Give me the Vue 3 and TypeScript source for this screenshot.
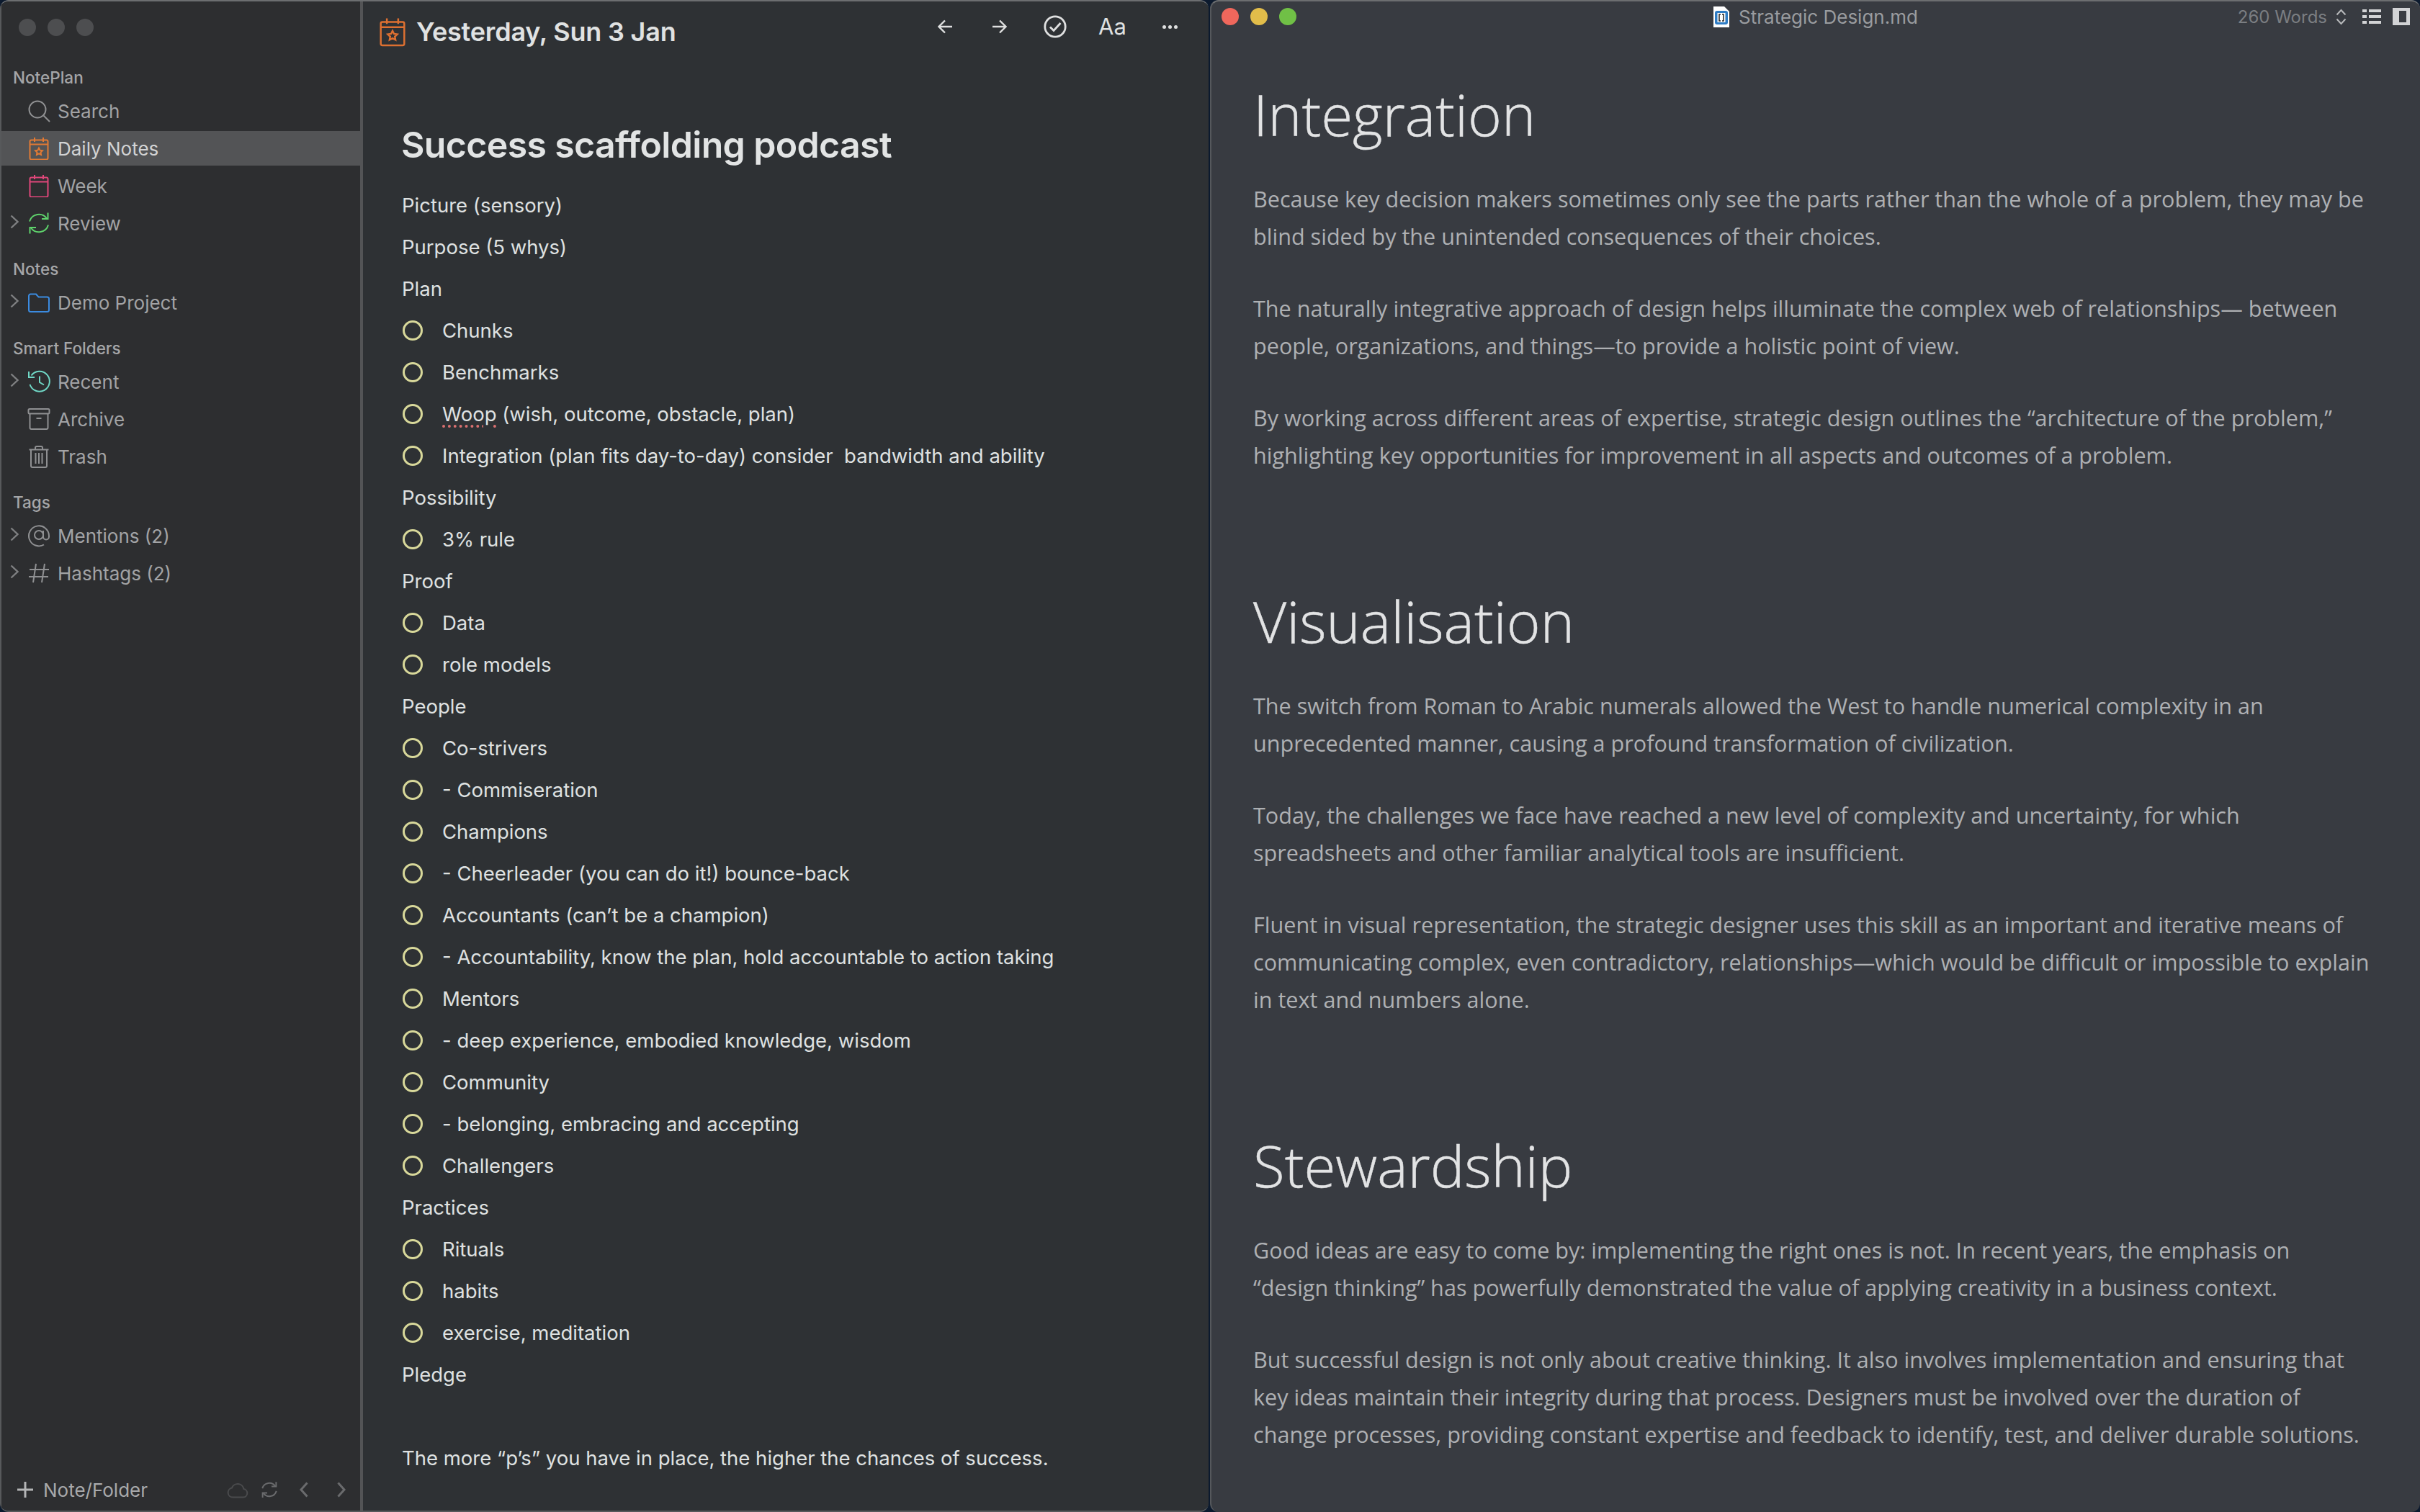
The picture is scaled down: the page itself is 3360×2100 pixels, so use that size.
<script setup lang="ts">
type NavItem = { label: string; icon: string; chevron?: boolean; active?: boolean }
type NavSection = { title: string; items: NavItem[] }
type NoteLine = { text: string; task?: boolean; misspelt?: string }

const star = 'M16 15.600l1.500 3.100 3.400.500-2.450 2.400.580 3.400-3.030-1.600-3.030 1.600.580-3.400-2.450-2.400 3.400-.500z'
const calendar =
  '<rect x="3.500" y="4.500" width="25" height="27" rx="2"/><path d="M3.500 10.500h25M10 1v6M22 1v6"/>'

const icons: Record<string, string> = {
  search:
    '<circle cx="14" cy="14" r="11.500" stroke="#8f9092"/><path d="M22.500 22.500l8.500 8.500" stroke="#8f9092"/>',
  daily: `<g stroke="#e27a34">${calendar}<path d="${star}"/></g>`,
  week: `<g stroke="#e0477a">${calendar}</g>`,
  review:
    '<g stroke="#5fd36c"><path d="M3 13.500A13.500 13.500 0 0 1 27 9.500M29 18.500A13.500 13.500 0 0 1 5 22.500"/><path d="M28.500 1.500v8.500h-8.500M3.500 30.500v-8.500H12"/></g>',
  folder:
    '<path d="M2 7a2.500 2.500 0 0 1 2.500-2.500h7.500l3.500 4h12A2.500 2.500 0 0 1 30 11v15.500a2.500 2.500 0 0 1-2.500 2.500h-23A2.500 2.500 0 0 1 2 26.500z" stroke="#3b8be0"/>',
  recent:
    '<g stroke="#70d8c6"><path d="M5.500 7.500A14 14 0 1 1 3.500 20"/><path d="M2 2v8h8M17 8.500V17l6 3.500"/></g>',
  archive:
    '<g stroke="#8f9092"><rect x="1.500" y="2" width="29" height="6.500" rx="1.500"/><path d="M3.500 8.500V28a2 2 0 0 0 2 2h21a2 2 0 0 0 2-2V8.500M12.500 15h7"/></g>',
  trash:
    '<g stroke="#8f9092"><path d="M2.500 6.500h27M5 6.500V29a2 2 0 0 0 2 2h18a2 2 0 0 0 2-2V6.500M11 6.500V4a2 2 0 0 1 2-2h6a2 2 0 0 1 2 2v2.500M11.500 11v15M16 11v15M20.500 11v15"/></g>',
  mention:
    '<g stroke="#8f9092"><circle cx="16" cy="15" r="6"/><path d="M22 9v8.500a4 4 0 0 0 8 0V16A14 14 0 1 0 23 28.500"/></g>',
  hash: '<path d="M12 3L8 29M24 3l-4 26M3 11h27M2 21h27" stroke="#8f9092"/>',
}

const sections: NavSection[] = [
  {
    title: 'NotePlan',
    items: [
      { label: 'Search', icon: 'search' },
      { label: 'Daily Notes', icon: 'daily', active: true },
      { label: 'Week', icon: 'week' },
      { label: 'Review', icon: 'review', chevron: true },
    ],
  },
  { title: 'Notes', items: [{ label: 'Demo Project', icon: 'folder', chevron: true }] },
  {
    title: 'Smart Folders',
    items: [
      { label: 'Recent', icon: 'recent', chevron: true },
      { label: 'Archive', icon: 'archive' },
      { label: 'Trash', icon: 'trash' },
    ],
  },
  {
    title: 'Tags',
    items: [
      { label: 'Mentions (2)', icon: 'mention', chevron: true },
      { label: 'Hashtags (2)', icon: 'hash', chevron: true },
    ],
  },
]

const t = (text: string): NoteLine => ({ text, task: true })
const p = (text: string): NoteLine => ({ text })

const noteLines: NoteLine[] = [
  p('Picture (sensory)'),
  p('Purpose (5 whys)'),
  p('Plan'),
  t('Chunks'),
  t('Benchmarks'),
  { text: ' (wish, outcome, obstacle, plan)', task: true, misspelt: 'Woop' },
  t('Integration (plan fits day-to-day) consider  bandwidth and ability'),
  p('Possibility'),
  t('3% rule'),
  p('Proof'),
  t('Data'),
  t('role models'),
  p('People'),
  t('Co-strivers'),
  t('- Commiseration'),
  t('Champions'),
  t('- Cheerleader (you can do it!) bounce-back'),
  t('Accountants (can’t be a champion)'),
  t('- Accountability, know the plan, hold accountable to action taking'),
  t('Mentors'),
  t('- deep experience, embodied knowledge, wisdom'),
  t('Community'),
  t('- belonging, embracing and accepting'),
  t('Challengers'),
  p('Practices'),
  t('Rituals'),
  t('habits'),
  t('exercise, meditation'),
  p('Pledge'),
  p(''),
  p('The more “p’s” you have in place, the higher the chances of success.'),
]

// line breaks follow the reader window's own wrapping
const articles = [
  {
    heading: 'Integration',
    paragraphs: [
      'Because key decision makers sometimes only see the parts rather than the whole of a problem, they may be\nblind sided by the unintended consequences of their choices.',
      'The naturally integrative approach of design helps illuminate the complex web of relationships— between\npeople, organizations, and things—to provide a holistic point of view.',
      'By working across different areas of expertise, strategic design outlines the “architecture of the problem,”\nhighlighting key opportunities for improvement in all aspects and outcomes of a problem.',
    ],
  },
  {
    heading: 'Visualisation',
    paragraphs: [
      'The switch from Roman to Arabic numerals allowed the West to handle numerical complexity in an\nunprecedented manner, causing a profound transformation of civilization.',
      'Today, the challenges we face have reached a new level of complexity and uncertainty, for which\nspreadsheets and other familiar analytical tools are insufficient.',
      'Fluent in visual representation, the strategic designer uses this skill as an important and iterative means of\ncommunicating complex, even contradictory, relationships—which would be difficult or impossible to explain\nin text and numbers alone.',
    ],
  },
  {
    heading: 'Stewardship',
    paragraphs: [
      'Good ideas are easy to come by: implementing the right ones is not. In recent years, the emphasis on\n“design thinking” has powerfully demonstrated the value of applying creativity in a business context.',
      'But successful design is not only about creative thinking. It also involves implementation and ensuring that\nkey ideas maintain their integrity during that process. Designers must be involved over the duration of\nchange processes, providing constant expertise and feedback to identify, test, and deliver durable solutions.',
    ],
  },
]
</script>

<template>
  <div class="desktop">
    <div class="notes-window">
      <aside class="sidebar">
        <div class="lights">
          <span class="light"></span>
          <span class="light"></span>
          <span class="light"></span>
        </div>

        <section v-for="section in sections" :key="section.title" class="nav-section">
          <h3 class="nav-title">{{ section.title }}</h3>
          <div
            v-for="item in section.items"
            :key="item.label"
            class="nav-row"
            :class="{ active: item.active }"
          >
            <svg v-if="item.chevron" class="chevron" viewBox="0 0 12 20">
              <path d="M1.500 1.500L10.500 10L1.500 18.500" />
            </svg>
            <svg class="nav-icon" viewBox="0 0 32 32" v-html="icons[item.icon]"></svg>
            <span>{{ item.label }}</span>
          </div>
        </section>

        <footer class="sidebar-foot">
          <svg class="plus" viewBox="0 0 22 22"><path d="M11 0v22M0 11h22" /></svg>
          <span class="foot-label">Note/Folder</span>
          <svg class="cloud" viewBox="0 0 30 24">
            <path d="M8 22.500a6.500 6.500 0 0 1-1-12.900 8.500 8.500 0 0 1 16.400 1.400A5.800 5.800 0 0 1 23 22.500z" />
          </svg>
          <svg class="sync" viewBox="0 0 32 32">
            <path d="M3 13.500A13.500 13.500 0 0 1 27 9.500M29 18.500A13.500 13.500 0 0 1 5 22.500" />
            <path d="M28.500 1.500v8.500h-8.500M3.500 30.500v-8.500H12" />
          </svg>
          <svg class="arrow-btn" viewBox="0 0 12 22"><path d="M10.500 1.500L2 11l8.500 9.500" /></svg>
          <svg class="arrow-btn next" viewBox="0 0 12 22"><path d="M1.500 1.500L10 11l-8.500 9.500" /></svg>
        </footer>
      </aside>

      <main class="editor">
        <header class="editor-head">
          <svg class="head-icon" viewBox="0 0 32 36">
            <rect x="1.500" y="5.500" width="29" height="29" rx="2" />
            <path d="M1.500 12h29M9 1v7M23 1v7" />
            <path d="M16 16.500l1.800 3.700 4 .6-2.900 2.800.7 4-3.600-1.900-3.600 1.900.7-4-2.900-2.800 4-.6z" />
          </svg>
          <span class="head-title">Yesterday, Sun 3 Jan</span>
          <div class="tools">
            <svg class="tool-arrow" viewBox="0 0 21 20"><path d="M20 10H2M10 1.500L1.500 10l8.500 8.500" /></svg>
            <svg class="tool-arrow fwd" viewBox="0 0 21 20"><path d="M1 10h18M11 1.500l8.500 8.500-8.500 8.500" /></svg>
            <svg class="tool-check" viewBox="0 0 32 32">
              <circle cx="16" cy="16" r="14.200" />
              <path d="M9 16.500l5 5 9.500-10.500" />
            </svg>
            <span class="tool-font">Aa</span>
            <span class="tool-dots"><i></i><i></i><i></i></span>
          </div>
        </header>

        <h1 class="doc-title">Success scaffolding podcast</h1>
        <div
          v-for="(line, index) in noteLines"
          :key="index"
          class="note-line"
        >
          <span v-if="line.task" class="task-ring"></span>
          <span class="note-text"><span v-if="line.misspelt" class="misspelt">{{ line.misspelt }}</span>{{ line.text }}</span>
        </div>
      </main>
    </div>

    <div class="reader-window">
      <div class="reader-bar">
        <div class="reader-lights">
          <span class="dot red"></span>
          <span class="dot yellow"></span>
          <span class="dot green"></span>
        </div>
        <div class="reader-file">
          <svg class="file-icon" viewBox="0 0 22 29">
            <path d="M0 0h15l7 7v22H0z" fill="#fff" />
            <rect x="2" y="6" width="18" height="19" rx="3" fill="#2e7cc4" />
            <rect x="5.500" y="9" width="11" height="13" fill="#fff" />
            <path d="M10 11H8v9h2M12 11h2v9h-2" fill="none" stroke="#222" stroke-width="1.500" />
          </svg>
          <span>Strategic Design.md</span>
        </div>
        <div class="reader-tools">
          <span class="word-count">260 Words</span>
          <svg class="updown" viewBox="0 0 15 23"><path d="M1.500 8.500L7.500 2l6 6.500M1.500 14.500l6 6.500 6-6.500" /></svg>
          <svg class="list-icon" viewBox="0 0 26 22">
            <path d="M0 1h6v4H0zM9 1h17v4H9zM0 9h6v4H0zM9 9h17v4H9zM0 17h6v4H0zM9 17h17v4H9z" />
          </svg>
          <svg class="panel-icon" viewBox="0 0 24 24">
            <path fill-rule="evenodd" d="M0 0h24v24H0zM9 4v16h10V4z" />
          </svg>
        </div>
      </div>

      <article v-for="article in articles" :key="article.heading" class="article">
        <h2>{{ article.heading }}</h2>
        <p v-for="(paragraph, index) in article.paragraphs" :key="index">{{ paragraph }}</p>
      </article>
    </div>
  </div>
</template>

<style scoped>
.desktop {
  display: flex;
  width: 3360px;
  height: 2100px;
  overflow: hidden;
  background: #0c1a2e;
  gap: 2px;
}

.notes-window {
  display: flex;
  width: 1678px;
  height: 2100px;
  flex: none;
  overflow: hidden;
  border-radius: 12px;
  border-top: 2px solid #6c6e70;
  border-bottom: 2px solid #57595b;
  box-sizing: border-box;
  font-family: Inter, "Noto Sans", sans-serif;
}

.sidebar {
  display: flex;
  flex-direction: column;
  width: 504px;
  flex: none;
  box-sizing: border-box;
  background: #2d2e30;
  border-left: 2px solid #57595b;
  border-right: 4px solid #535456;
}

.lights {
  display: flex;
  gap: 16px;
  padding: 24px 0 0 24px;
  height: 66px;
  box-sizing: border-box;
  margin-bottom: 24px;
}

.light {
  width: 24px;
  height: 24px;
  border-radius: 50%;
  background: #4d4e50;
}

.nav-section {
  margin-bottom: 20px;
}

.nav-title {
  margin: 0 0 6px;
  padding-left: 16px;
  height: 32px;
  font-size: 22.500px;
  line-height: 32px;
  font-weight: 500;
  color: #a5a6a8;
}

.nav-row {
  position: relative;
  display: flex;
  align-items: center;
  height: 48px;
  margin-bottom: 4px;
  padding-left: 36px;
  font-size: 26px;
  color: #a2a3a5;
}

.nav-row.active {
  background: #535456;
  color: #d2d3d4;
}

.chevron {
  position: absolute;
  left: 12px;
  top: 12px;
  width: 12px;
  height: 20px;
  fill: none;
  stroke: #7f8082;
  stroke-width: 2.400;
}

.nav-icon {
  width: 32px;
  height: 32px;
  margin-right: 10px;
  fill: none;
  stroke-width: 2;
}

.sidebar-foot {
  display: flex;
  align-items: center;
  margin-top: auto;
  height: 58px;
  padding-left: 22px;
  color: #a8a9ab;
  font-size: 26px;
}

.plus {
  width: 22px;
  height: 22px;
  margin-right: 14px;
  fill: none;
  stroke: #b4b5b6;
  stroke-width: 3;
}

.foot-label {
  width: 255px;
}

.cloud {
  width: 30px;
  height: 24px;
  margin-right: 17px;
  fill: none;
  stroke: #4a4b4d;
  stroke-width: 2;
}

.sync {
  width: 24px;
  height: 26px;
  margin-right: 30px;
  fill: none;
  stroke: #6a6b6d;
  stroke-width: 2.600;
}

.arrow-btn {
  width: 12px;
  height: 22px;
  fill: none;
  stroke: #6a6b6d;
  stroke-width: 3;
}

.arrow-btn.next {
  margin-left: 40px;
}

.editor {
  flex: 1;
  background: #2e3134;
  color: #dfe1e1;
}

.editor-head {
  display: flex;
  align-items: center;
  height: 84px;
  padding: 0 43px 0 23px;
}

.head-icon {
  width: 36px;
  height: 41px;
  margin-right: 15px;
  fill: none;
  stroke: #dd7031;
  stroke-width: 2.200;
}

.head-title {
  font-size: 36px;
  font-weight: 600;
  color: #e0e2e2;
  letter-spacing: -0.200px;
}

.tools {
  display: flex;
  align-items: center;
  margin-left: auto;
  margin-bottom: 14px;
  color: #dfe0e0;
}

.tool-arrow {
  width: 21px;
  height: 20px;
  fill: none;
  stroke: #dfe0e0;
  stroke-width: 2.400;
}

.tool-arrow.fwd {
  margin-left: 54px;
}

.tool-check {
  width: 32px;
  height: 32px;
  margin-left: 51px;
  fill: none;
  stroke: #dfe0e0;
  stroke-width: 2.800;
}

.tool-font {
  margin-left: 44px;
  font-size: 31px;
  line-height: 32px;
  width: 38px;
}

.tool-dots {
  display: flex;
  gap: 3px;
  margin-left: 51px;
}

.tool-dots i {
  width: 5px;
  height: 5px;
  border-radius: 50%;
  background: #dfe0e0;
}

.doc-title {
  margin: 85px 0 25px 53px;
  height: 60px;
  font-size: 50px;
  line-height: 60px;
  font-weight: 600;
  letter-spacing: -0.650px;
  color: #e2e4e4;
}

.note-line {
  display: flex;
  align-items: center;
  height: 58px;
  padding-left: 54px;
  font-size: 27.500px;
  white-space: pre;
}

.task-ring {
  width: 28px;
  height: 28px;
  margin: 0 27px 0 1px;
  box-sizing: border-box;
  border: 3px solid #d8d89a;
  border-radius: 50%;
}

.misspelt {
  text-decoration: underline dotted #d97070 4px;
  text-underline-offset: 5px;
}

.reader-window {
  flex: 1;
  height: 2100px;
  box-sizing: border-box;
  overflow: hidden;
  background: #383b41;
  border-radius: 12px;
  border-top: 2px solid #6c6e70;
  border-left: 2px solid #55585c;
  font-family: "Open Sans", "Noto Sans", sans-serif;
}

.reader-bar {
  display: grid;
  grid-template-columns: 1fr auto 1fr;
  align-items: center;
  height: 42px;
  margin-bottom: 64px;
  font-family: Inter, "Noto Sans", sans-serif;
}

.reader-lights {
  display: flex;
  gap: 16px;
  padding-left: 14px;
}

.dot {
  width: 24px;
  height: 24px;
  border-radius: 50%;
}

.red { background: #ef675c; }
.yellow { background: #e2bd4a; }
.green { background: #70c046; }

.reader-file {
  display: flex;
  align-items: center;
  gap: 13px;
  font-size: 26px;
  color: #9a9c9f;
}

.file-icon {
  width: 22px;
  height: 29px;
}

.reader-tools {
  display: flex;
  align-items: center;
  justify-content: flex-end;
  padding-right: 14px;
}

.word-count {
  font-size: 24px;
  color: #7b7e82;
}

.updown {
  width: 15px;
  height: 23px;
  margin-left: 12px;
  fill: none;
  stroke: #b6b8ba;
  stroke-width: 2;
}

.list-icon {
  width: 26px;
  height: 22px;
  margin-left: 22px;
  fill: #d2d3d5;
}

.panel-icon {
  width: 24px;
  height: 24px;
  margin-left: 16px;
  fill: #d2d3d5;
}

.article {
  padding: 0 0 0 58px;
  margin-bottom: 154px;
}

.article h2 {
  margin: 0 0 42px;
  height: 100px;
  font-size: 80px;
  line-height: 100px;
  font-weight: 300;
  color: #e2e3e4;
  -webkit-text-stroke: 0.500px #e2e3e4;
}

.article p {
  margin: 0 0 48px;
  font-size: 30.600px;
  line-height: 52px;
  color: #aeb0b3;
  white-space: pre;
}

.article p:last-child {
  margin-bottom: 0;
}
</style>

<style>
html,
body {
  margin: 0;
  background: #0c1a2e;
}
</style>
